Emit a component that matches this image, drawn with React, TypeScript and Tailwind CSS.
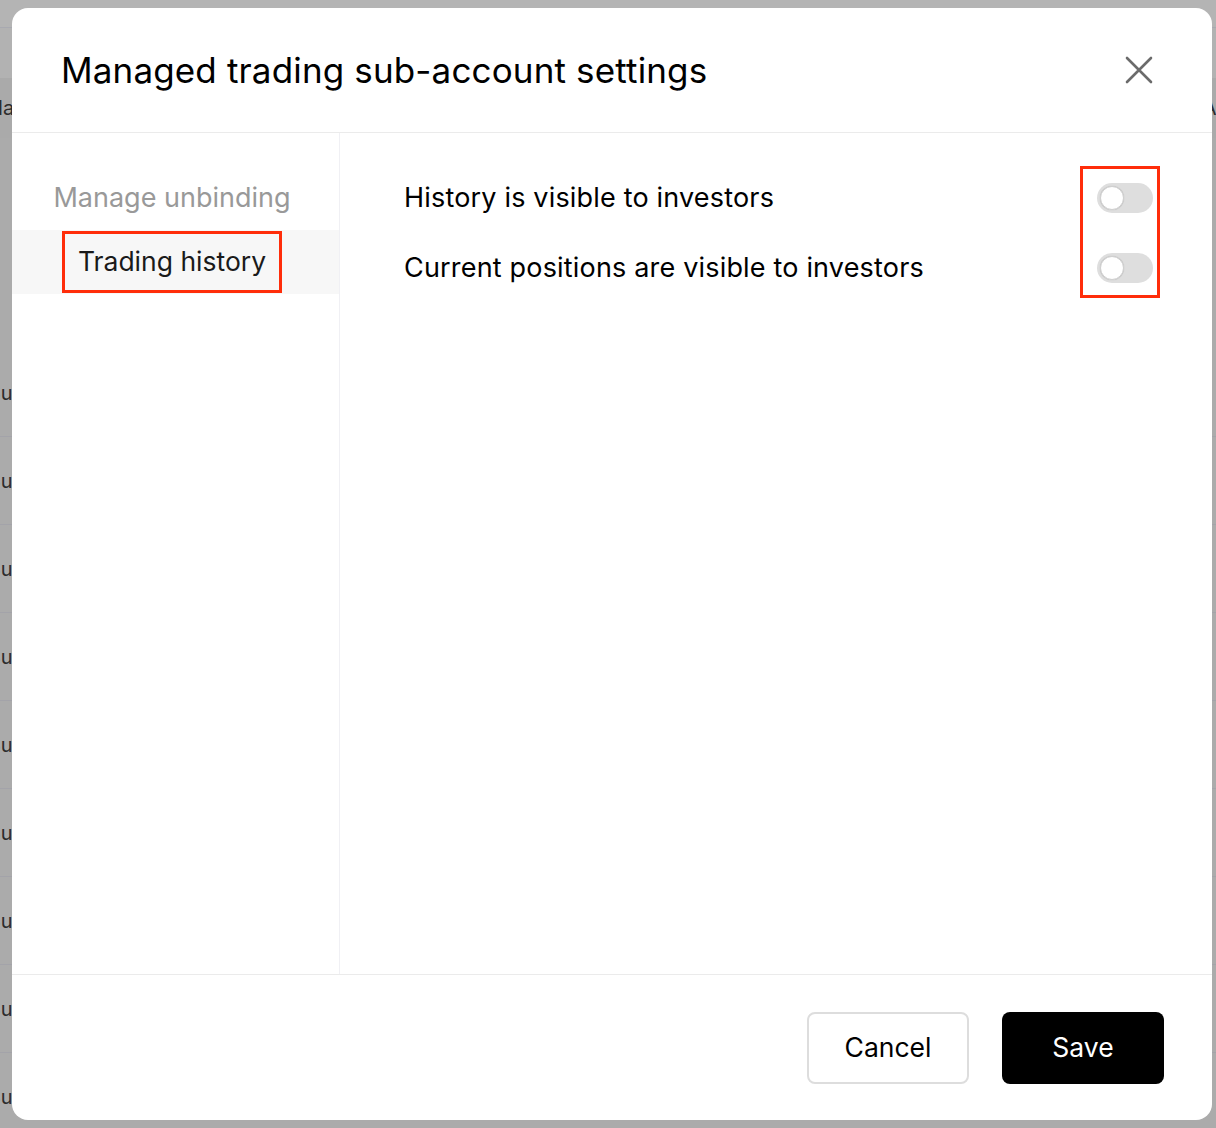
import React from "react";

const font = { fontFamily: "Inter, 'Noto Sans', 'Liberation Sans', sans-serif" };

function Toggle() {
  return (
    <div className="w-[56px] h-[30px] rounded-full bg-[#dedede] flex items-center px-[3px]">
      <div className="w-[24px] h-[24px] rounded-full bg-white border border-[#d0d0d0] shadow-[0_0_1px_rgba(0,0,0,0.2)]" />
    </div>
  );
}

function BackdropRow({ children }: { children?: React.ReactNode }) {
  return (
    <div className="h-[88px] border-b border-[#a3a3a9] flex items-center justify-between text-[20px] text-[#2c2c2c]">
      {children}
    </div>
  );
}

export default function App() {
  const rows = Array.from({ length: 9 });
  return (
    <div className="relative w-[1216px] h-[1128px] overflow-hidden bg-[#ababab]" style={font}>
      {/* underlying page (dimmed) */}
      <div className="flex flex-col">
        <div className="h-[28px] bg-[#b4b4b4] border-b border-[#a8a9b0]" />
        <div className="h-[50px] bg-[#b2b2b2]" />
        <div className="h-[60px] flex items-center justify-between text-[20px] text-[#2c2c2c] bg-[#aaaaaa]">
          <span className="ml-[-12px]">Na</span>
          <span className="mr-[-12px]">Ac</span>
        </div>
        <div className="h-[211px]" />
        {rows.map((_, i) => (
          <BackdropRow key={i}>
            <span className="ml-[-12px]">Su</span>
            <span />
          </BackdropRow>
        ))}
      </div>

      {/* modal */}
      <div className="absolute left-[12px] top-[8px] w-[1200px] h-[1112px] bg-white rounded-[16px] flex flex-col overflow-hidden">
        <div className="h-[125px] border-b border-[#ebebeb] flex items-center justify-between pl-[49px] pr-[58px] shrink-0">
          <div className="text-[35px] text-black tracking-[0.15px]">Managed trading sub-account settings</div>
          <svg width="30" height="30" viewBox="0 0 30 30" fill="none">
            <path d="M3 3 L27 27 M27 3 L3 27" stroke="#6b6b6b" strokeWidth="2.6" strokeLinecap="round" />
          </svg>
        </div>

        <div className="flex-1 flex min-h-0">
          <div className="w-[328px] border-r border-[#f0f0f4] pt-[33px] flex flex-col shrink-0">
            <div className="h-[64px] flex items-center justify-center pr-[7px] text-[27px] text-[#999999]">Manage unbinding</div>
            <div className="h-[64px] flex items-center justify-center pr-[7px] bg-[#f7f7f7] text-[26.5px] text-[#1a1a1a]">
              <span className="h-[62px] px-[13px] flex items-center border-[3px] border-[#ff2d0a]">Trading history</span>
            </div>
          </div>

          <div className="relative flex-1 pl-[64px] pr-[59px] pt-[30px] flex flex-col">
            <div className="h-[70px] flex items-center justify-between">
              <span className="text-[27px] tracking-[0.18px] text-black">History is visible to investors</span>
              <Toggle />
            </div>
            <div className="h-[70px] flex items-center justify-between">
              <span className="text-[27px] tracking-[0.18px] text-black">Current positions are visible to investors</span>
              <Toggle />
            </div>
            <div className="absolute left-[740px] top-[33px] w-[80px] h-[132px] border-[3px] border-[#ff2d0a]" />
          </div>
        </div>

        <div className="h-[146px] border-t border-[#ebebeb] flex items-center justify-end gap-[33px] pr-[48px] shrink-0">
          <button className="w-[162px] h-[72px] rounded-[8px] border-2 border-[#dddddd] bg-white text-[26.5px] text-black">Cancel</button>
          <button className="w-[162px] h-[72px] rounded-[8px] bg-black text-[26.5px] text-white">Save</button>
        </div>
      </div>
    </div>
  );
}
